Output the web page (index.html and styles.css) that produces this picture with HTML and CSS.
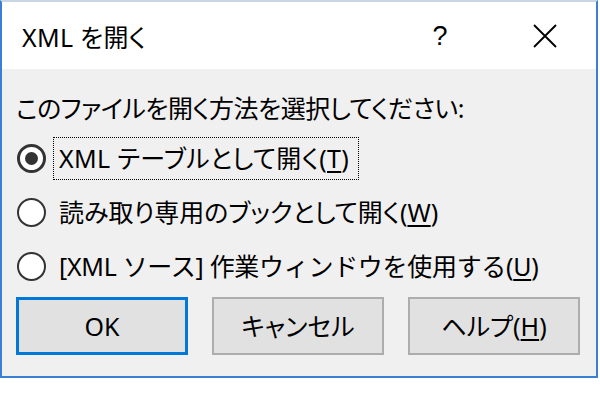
FILE: index.html
```html
<!DOCTYPE html>
<html lang="ja">
<head>
<meta charset="utf-8">
<title>XML を開く</title>
<link rel="stylesheet" href="styles.css">
</head>
<body>
<div class="window">
  <div class="titlebar">
    <div class="title">XML を開く</div>
    <div class="tb-btn help">?</div>
    <div class="tb-btn close">
      <svg width="24" height="24" viewBox="0 0 24 24"><path d="M1 1 L23 23 M23 1 L1 23" stroke="#000" stroke-width="1.9" fill="none"/></svg>
    </div>
  </div>
  <div class="content">
    <div class="prompt">このファイルを開く方法を選択してください:</div>
    <div class="options">
      <div class="option">
        <span class="radio checked"></span>
        <span class="label focused">XML テーブルとして開く(<span class="ak">T</span>)</span>
      </div>
      <div class="option">
        <span class="radio"></span>
        <span class="label">読み取り専用のブックとして開く(<span class="ak">W</span>)</span>
      </div>
      <div class="option">
        <span class="radio"></span>
        <span class="label full">[XML ソース] 作業ウィンドウを使用する(<span class="ak">U</span>)</span>
      </div>
    </div>
    <div class="buttons">
      <div class="btn default">OK</div>
      <div class="btn">キャンセル</div>
      <div class="btn">ヘルプ(<span class="ak">H</span>)</div>
    </div>
  </div>
</div>
</body>
</html>
```
FILE: styles.css
```css
html, body {
  margin: 0;
  padding: 0;
  background: #ffffff;
}
body {
  width: 600px;
  height: 400px;
  overflow: hidden;
  font-family: "Noto Sans", "Noto Sans CJK JP", sans-serif;
  font-size: 25px;
  font-feature-settings: "palt";
  color: #000;
}
.window {
  box-sizing: border-box;
  width: 598px;
  height: 378px;
  border: 2px solid #3a7fd4;
  border-top-color: #c9d6e6;
  display: flex;
  flex-direction: column;
}
.titlebar {
  height: 67px;
  background: #ffffff;
  display: flex;
  align-items: center;
  flex-shrink: 0;
}
.title {
  flex: 1;
  padding-left: 20px;
  line-height: 34px;
  padding-top: 2px;
  letter-spacing: 0.3px;
}
.tb-btn {
  height: 67px;
  display: flex;
  align-items: center;
  justify-content: center;
}
.help {
  width: 106px;
  font-family: "Liberation Sans", sans-serif;
  font-size: 27px;
  padding-top: 2px;
}
.close {
  width: 103px;
}
.content {
  flex: 1;
  background: #f0f0f0;
  padding: 22px 14px 0 14px;
  display: flex;
  flex-direction: column;
}
.prompt {
  line-height: 34px;
  white-space: nowrap;
  letter-spacing: -0.5px;
}
.options {
  margin-top: 11px;
  display: flex;
  flex-direction: column;
  gap: 10px;
}
.option {
  height: 44px;
  display: flex;
  align-items: center;
  gap: 7px;
  white-space: nowrap;
}
.radio {
  box-sizing: border-box;
  width: 29px;
  height: 29px;
  margin-left: 1px;
  border-radius: 50%;
  border: 2px solid #333;
  background: #fff;
  display: flex;
  align-items: center;
  justify-content: center;
  flex-shrink: 0;
}
.radio.checked {
  border-width: 3px;
}
.radio.checked::after {
  content: "";
  width: 13px;
  height: 13px;
  border-radius: 50%;
  background: #333;
}
.label {
  box-sizing: border-box;
  height: 43px;
  display: flex;
  align-items: center;
  padding: 0 6px 0 5px;
  border: 1px solid transparent;
  line-height: 34px;
}
.label.focused {
  border: 1.5px dotted #000;
  letter-spacing: 0.35px;
  padding-right: 9px;
}
.label.full {
  font-feature-settings: normal;
  letter-spacing: -0.3px;
}
.ak {
  text-decoration: underline;
  text-underline-offset: 3px;
  text-decoration-thickness: 2px;
}
.buttons {
  margin-top: 9px;
  display: flex;
  gap: 24px;
}
.btn {
  box-sizing: border-box;
  width: 172px;
  height: 58px;
  background: #e1e1e1;
  border: 2px solid #adadad;
  display: flex;
  align-items: center;
  justify-content: center;
  white-space: nowrap;
  line-height: 34px;
}
.btn.default {
  border: 3px solid #0078d7;
}
```
